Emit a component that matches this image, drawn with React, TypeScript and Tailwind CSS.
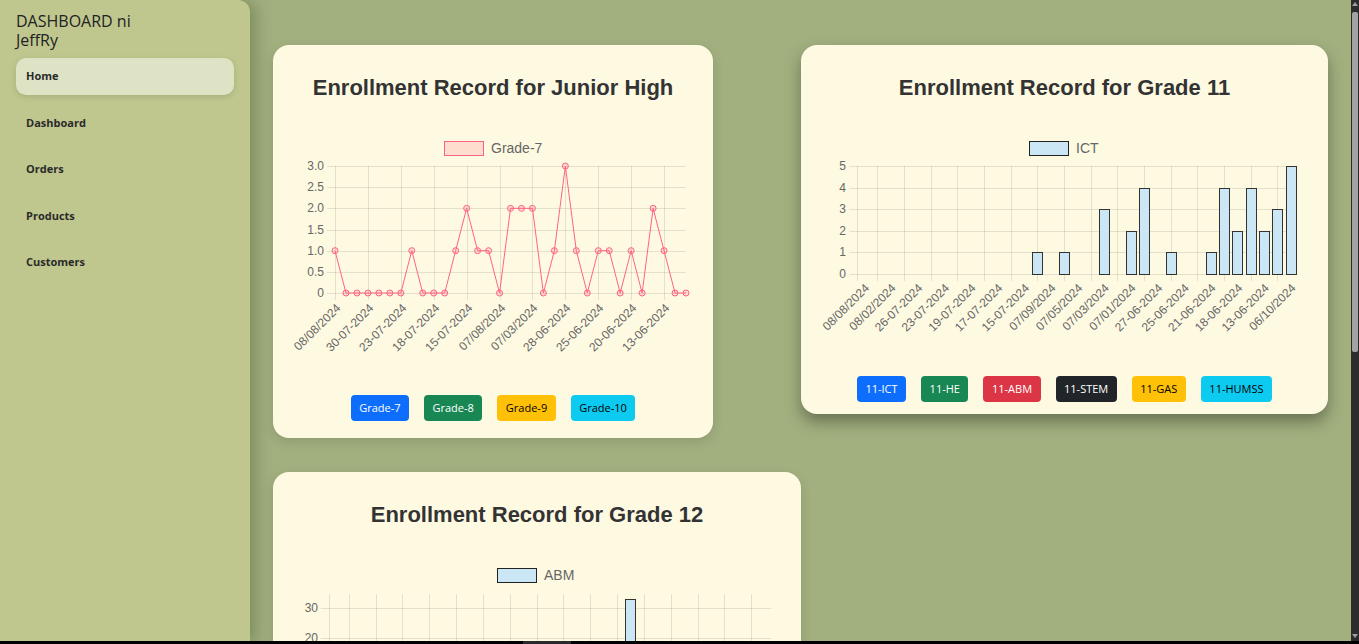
import type { ReactNode } from 'react';

const gridColor = 'rgba(0,0,0,0.1)';
const tickColor = '#666';
const chartFont = '"Liberation Sans", Arial, sans-serif';

const navItems = ['Home', 'Dashboard', 'Orders', 'Products', 'Customers'];

// junior high line chart
const jhValues = [1, 0, 0, 0, 0, 0, 0, 1, 0, 0, 0, 1, 2, 1, 1, 0, 2, 2, 2, 0, 1, 3, 1, 0, 1, 1, 0, 1, 0, 2, 1, 0, 0];
const jhTicks = ['08/08/2024', '30-07-2024', '23-07-2024', '18-07-2024', '15-07-2024', '07/08/2024', '07/03/2024', '28-06-2024', '25-06-2024', '20-06-2024', '13-06-2024'];

// grade 11 bars (index -> value)
const g11Bars: Record<number, number> = { 13: 1, 15: 1, 18: 3, 20: 2, 21: 4, 23: 1, 26: 1, 27: 4, 28: 2, 29: 4, 30: 2, 31: 3, 32: 5 };
const g11Ticks = ['08/08/2024', '08/02/2024', '26-07-2024', '23-07-2024', '19-07-2024', '17-07-2024', '15-07-2024', '07/09/2024', '07/05/2024', '07/03/2024', '07/01/2024', '27-06-2024', '25-06-2024', '21-06-2024', '18-06-2024', '13-06-2024', '06/10/2024'];

const g12Bars: Record<number, number> = { 22: 33 };
const g12Ticks = ['08/08/2024', '08/02/2024', '26-07-2024', '23-07-2024', '19-07-2024', '17-07-2024', '15-07-2024', '07/09/2024', '07/05/2024', '07/03/2024', '07/01/2024', '27-06-2024', '25-06-2024', '21-06-2024', '18-06-2024', '13-06-2024', '06/10/2024'];

type Btn = { label: string; cls: string };

const jhButtons: Btn[] = [
  { label: 'Grade-7', cls: 'bg-[#0d6efd] text-white' },
  { label: 'Grade-8', cls: 'bg-[#198754] text-white' },
  { label: 'Grade-9', cls: 'bg-[#ffc107] text-black' },
  { label: 'Grade-10', cls: 'bg-[#0dcaf0] text-black' },
];

const g11Buttons: Btn[] = [
  { label: '11-ICT', cls: 'bg-[#0d6efd] text-white' },
  { label: '11-HE', cls: 'bg-[#198754] text-white' },
  { label: '11-ABM', cls: 'bg-[#dc3545] text-white' },
  { label: '11-STEM', cls: 'bg-[#212529] text-white' },
  { label: '11-GAS', cls: 'bg-[#ffc107] text-black' },
  { label: '11-HUMSS', cls: 'bg-[#0dcaf0] text-black' },
];

const g12Buttons: Btn[] = [
  { label: '12-ICT', cls: 'bg-[#0d6efd] text-white' },
  { label: '12-HE', cls: 'bg-[#198754] text-white' },
  { label: '12-ABM', cls: 'bg-[#dc3545] text-white' },
  { label: '12-STEM', cls: 'bg-[#212529] text-white' },
  { label: '12-GAS', cls: 'bg-[#ffc107] text-black' },
  { label: '12-HUMSS', cls: 'bg-[#0dcaf0] text-black' },
];

function Legend({ x, label, fill, stroke }: { x: number; label: string; fill: string; stroke: string }) {
  return (
    <g>
      <rect x={x + 0.5} y={11.5} width={39} height={14} fill={fill} stroke={stroke} strokeWidth={1} />
      <text x={x + 47} y={23} fontSize={14} fill={tickColor} fontFamily={chartFont}>
        {label}
      </text>
    </g>
  );
}

function XLabel({ x, y, text }: { x: number; y: number; text: string }) {
  return (
    <text
      transform={`translate(${x} ${y}) rotate(-45)`}
      textAnchor="end"
      dominantBaseline="central"
      fontSize={12}
      fill={tickColor}
      fontFamily={chartFont}
    >
      {text}
    </text>
  );
}

function LineChart() {
  const x0 = 62;
  const x1 = 413;
  const step = (x1 - x0) / 32;
  const yOf = (v: number) => 163 - v * 42.33;
  const pts = jhValues.map((v, i) => [x0 + i * step, yOf(v)] as const);
  return (
    <svg width={440} height={250} className="block">
      <Legend x={171} label="Grade-7" fill="rgba(255,99,132,0.2)" stroke="rgb(255,99,132)" />
      {[0, 0.5, 1, 1.5, 2, 2.5, 3].map((v) => (
        <g key={v}>
          <line x1={x0 - 8} x2={x1} y1={Math.round(yOf(v)) + 0.5} y2={Math.round(yOf(v)) + 0.5} stroke={gridColor} />
          <text x={51} y={yOf(v)} textAnchor="end" dominantBaseline="central" fontSize={12} fill={tickColor} fontFamily={chartFont}>
            {v === 0 ? '0' : v.toFixed(1)}
          </text>
        </g>
      ))}
      {jhTicks.map((t, k) => {
        const x = Math.round(x0 + k * 3 * step) + 0.5;
        return (
          <g key={t + k}>
            <line x1={x} x2={x} y1={36} y2={170} stroke={gridColor} />
            <XLabel x={x + 3} y={176} text={t} />
          </g>
        );
      })}
      <polyline points={pts.map((p) => p.join(',')).join(' ')} fill="none" stroke="rgb(255,99,132)" strokeWidth={1} />
      {pts.map(([x, y], i) => (
        <circle key={i} cx={x} cy={y} r={3} fill="rgba(255,99,132,0.2)" stroke="rgb(255,99,132)" strokeWidth={1} />
      ))}
    </svg>
  );
}

type BarProps = {
  width: number;
  height: number;
  x0: number;
  x1: number;
  top: number;
  yOf: (v: number) => number;
  yTicks: number[];
  labelRight: number;
  legendX: number;
  legend: string;
  bars: Record<number, number>;
  ticks: string[];
};

function BarChart({ width, height, x0, x1, top, yOf, yTicks, labelRight, legendX, legend, bars, ticks }: BarProps) {
  const cw = (x1 - x0) / 33;
  const base = yOf(0);
  return (
    <svg width={width} height={height} className="block">
      <Legend x={legendX} label={legend} fill="#cbe7f5" stroke="#222" />
      {yTicks.map((v) => (
        <g key={v}>
          <line x1={x0 - 8} x2={x1} y1={Math.round(yOf(v)) + 0.5} y2={Math.round(yOf(v)) + 0.5} stroke={gridColor} />
          <text x={labelRight} y={yOf(v)} textAnchor="end" dominantBaseline="central" fontSize={12} fill={tickColor} fontFamily={chartFont}>
            {v}
          </text>
        </g>
      ))}
      <line x1={Math.round(x0) + 0.5} x2={Math.round(x0) + 0.5} y1={top} y2={base + 7} stroke={gridColor} />
      {Array.from({ length: 16 }, (_, k) => {
        const x = Math.round(x0 + (2 * k + 1.5) * cw) + 0.5;
        return <line key={k} x1={x} x2={x} y1={top} y2={base + 7} stroke={gridColor} />;
      })}
      {Object.entries(bars).map(([i, v]) => {
        const cx = x0 + (Number(i) + 0.5) * cw;
        const y = yOf(v);
        return (
          <rect key={i} x={Math.round(cx - 5) + 0.5} y={Math.round(y) + 0.5} width={10} height={Math.round(base - y)} fill="#cbe7f5" stroke="#333" strokeWidth={1} />
        );
      })}
      {ticks.map((t, k) => (
        <XLabel key={t + k} x={x0 + (2 * k + 0.5) * cw + 3} y={base + 12} text={t} />
      ))}
    </svg>
  );
}

function Buttons({ items }: { items: Btn[] }) {
  return (
    <div className="flex justify-center gap-[15px]">
      {items.map((b) => (
        <button
          key={b.label}
          className={`h-[26px] rounded-[4px] px-[8.5px] font-['Open_Sans',sans-serif] text-[11px] ${b.cls}`}
        >
          {b.label}
        </button>
      ))}
    </div>
  );
}

function Card({ title, width, className, children }: { title: string; width: string; className: string; children: ReactNode }) {
  return (
    <div className={`${width} rounded-[16px] bg-[#fefae2] pt-[30px] ${className}`}>
      <h2 className="text-center font-['Liberation_Sans',Arial,sans-serif] text-[22px] leading-[25px] font-bold text-[#333]">{title}</h2>
      <div className="mt-[30px]">{children}</div>
    </div>
  );
}

export default function App() {
  return (
    <div className="relative flex h-screen overflow-hidden bg-[#a2b07f]">
      <aside className="relative z-10 w-[250px] shrink-0 rounded-tr-[12px] bg-[#bfc78e] px-[16px] pt-[12px] shadow-[6px_0_16px_rgba(60,75,40,0.35)]">
        <h1 className="w-[150px] font-['Open_Sans',sans-serif] text-[16px] leading-[19px] text-[#222]">DASHBOARD ni JeffRy</h1>
        <nav className="mt-[8px] flex flex-col gap-[9.5px]">
          {navItems.map((item, i) => (
            <div
              key={item}
              className={`flex h-[37px] items-center rounded-[10px] pl-[10px] font-['Open_Sans',sans-serif] text-[11px] font-bold text-[#2a2a2a] ${
                i === 0 ? 'bg-[#dfe3c6] shadow-[0_2px_6px_rgba(0,0,0,0.12)]' : ''
              }`}
            >
              {item}
            </div>
          ))}
        </nav>
      </aside>

      <main className="flex flex-1 flex-wrap content-start items-start gap-x-[88px] gap-y-[34px] pt-[45px] pl-[23px]">
        <Card title="Enrollment Record for Junior High" width="w-[440px]" className="pb-[17px] shadow-[0_4px_12px_rgba(0,0,0,0.12)]">
          <LineChart />
          <div className="mt-[15px]">
            <Buttons items={jhButtons} />
          </div>
        </Card>

        <Card title="Enrollment Record for Grade 11" width="w-[527px]" className="pb-[12px] shadow-[0_8px_16px_rgba(0,0,0,0.35)]">
          <BarChart
            width={527}
            height={236}
            x0={56.4}
            x1={496.3}
            top={36}
            yOf={(v) => 144 - v * 21.6}
            yTicks={[0, 1, 2, 3, 4, 5]}
            labelRight={45}
            legendX={228}
            legend="ICT"
            bars={g11Bars}
            ticks={g11Ticks}
          />
          <div className="mt-[10px]">
            <Buttons items={g11Buttons} />
          </div>
        </Card>

        <Card title="Enrollment Record for Grade 12" width="w-[528px]" className="pb-[12px] shadow-[0_4px_12px_rgba(0,0,0,0.12)]">
          <BarChart
            width={528}
            height={236}
            x0={55.7}
            x1={498.3}
            top={37}
            yOf={(v) => 51 + (30 - v) * 3}
            yTicks={[0, 10, 20, 30]}
            labelRight={45}
            legendX={224}
            legend="ABM"
            bars={g12Bars}
            ticks={g12Ticks}
          />
          <div className="mt-[10px]">
            <Buttons items={g12Buttons} />
          </div>
        </Card>
      </main>

      {/* window scrollbar as seen in the capture */}
      <div className="absolute top-0 right-0 bottom-0 z-20 flex w-[8px] flex-col items-center bg-[#2c2c2c]">
        <div className="mt-[2px] h-0 w-0 border-x-[3px] border-b-[4px] border-x-transparent border-b-[#a0a0a0]" />
        <div className="mt-[6px] h-[340px] w-[6px] rounded-[2px] bg-[#a3a3a3]" />
        <div className="mt-auto mb-[6px] h-0 w-0 border-x-[3px] border-t-[4px] border-x-transparent border-t-[#a0a0a0]" />
      </div>
      <div className="absolute right-0 bottom-0 left-0 z-30 h-[3px] bg-black">
        <div className="ml-[523px] h-full w-[48px] bg-[#2a2a2a]" />
      </div>
    </div>
  );
}
